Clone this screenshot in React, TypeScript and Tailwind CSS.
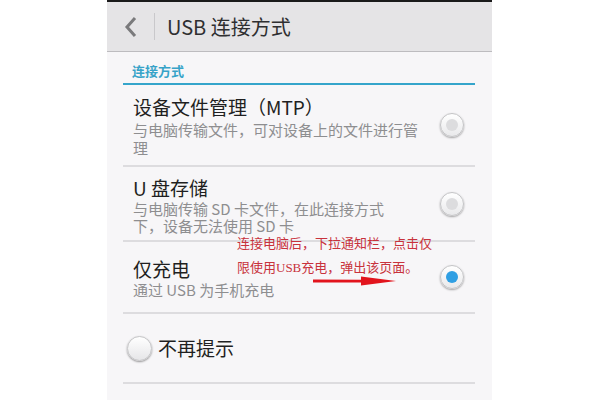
import React from "react";

const cjk = { fontFamily: '"Noto Sans CJK SC", "Noto Sans", sans-serif' };
const serif = { fontFamily: '"Liberation Serif", "Noto Sans CJK SC", serif' };

function Radio({ checked }: { checked?: boolean }) {
  return (
    <div className="w-[24px] h-[24px] rounded-full border border-[#c4c4c6] bg-gradient-to-b from-[#ffffff] to-[#e9e9eb] shadow-[0_1px_2px_rgba(0,0,0,0.35)] flex items-center justify-center shrink-0">
      <div
        className={
          checked
            ? "w-[12px] h-[12px] rounded-full bg-[#2f9fe3]"
            : "w-[12px] h-[12px] rounded-full bg-[#dcdcde]"
        }
      />
    </div>
  );
}

function Divider() {
  return <div className="ml-[16px] mr-[17px] h-[2px] bg-[#dddcdf] shrink-0" />;
}

export default function App() {
  return (
    <div className="w-[600px] h-[400px] bg-white overflow-hidden" style={cjk}>
      <div className="relative ml-[107px] w-[385px] h-[400px] flex flex-col bg-[#f7f6f8]">
        {/* status strip */}
        <div className="h-[2px] bg-[#1a1a1a] shrink-0" />

        {/* action bar */}
        <div className="h-[50px] bg-[#e5e4e6] flex items-center shrink-0 border-b border-[#bdbcbf]">
          <svg width="14" height="22" viewBox="0 0 14 22" className="ml-[17px]">
            <polyline points="11,2 3,11 11,20" fill="none" stroke="#7a7a7c" strokeWidth="3" strokeLinejoin="miter" />
          </svg>
          <div className="ml-[16px] w-[1px] h-[27px] bg-[#c9c8cb]" />
          <div className="ml-[12px] text-[20px] leading-[24px] text-[#2f2f31]">USB 连接方式</div>
        </div>

        {/* section header */}
        <div className="h-[31px] flex items-end pb-[3px] pl-[25px] shrink-0">
          <span className="text-[13px] leading-[18px] font-bold text-[#37a3c8]">连接方式</span>
        </div>
        <div className="ml-[16px] mr-[17px] h-[2px] bg-[#35a5cb] shrink-0" />

        {/* MTP */}
        <div className="h-[80px] flex items-center pl-[26px] pr-[28px] shrink-0">
          <div className="flex-1 self-start pt-[10px]">
            <div className="text-[19px] leading-[24px] text-[#1f1f21]">设备文件管理（MTP）</div>
            <div className="mt-[2px] text-[15px] leading-[18px] text-[#8e8e90]">
              与电脑传输文件，可对设备上的文件进行管
              <br />理
            </div>
          </div>
          <Radio />
        </div>
        <Divider />

        {/* mass storage */}
        <div className="h-[73px] flex items-center pl-[26px] pr-[28px] shrink-0">
          <div className="flex-1 self-start pt-[9px]">
            <div className="text-[19px] leading-[24px] text-[#1f1f21]">U 盘存储</div>
            <div className="text-[15px] leading-[17px] text-[#8e8e90]">
              与电脑传输 SD 卡文件，在此连接方式
              <br />下，设备无法使用 SD 卡
            </div>
          </div>
          <Radio />
        </div>
        <Divider />

        {/* charge only */}
        <div className="h-[70px] flex items-center pl-[26px] pr-[28px] shrink-0">
          <div className="flex-1 self-start pt-[15px]">
            <div className="text-[19px] leading-[24px] text-[#1f1f21]">仅充电</div>
            <div className="text-[15px] leading-[18px] text-[#8e8e90]">通过 USB 为手机充电</div>
          </div>
          <Radio checked />
        </div>
        <Divider />

        {/* don't show again */}
        <div className="h-[68px] flex items-center pl-[20px] shrink-0">
          <div className="w-[25px] h-[25px] rounded-full border border-[#c4c4c6] bg-gradient-to-b from-[#ffffff] to-[#e6e6e8] shadow-[0_1px_2px_rgba(0,0,0,0.4)]" />
          <span className="ml-[6px] text-[19px] leading-[24px] text-[#1f1f21]">不再提示</span>
        </div>
        <Divider />

        {/* red note over the list */}
        <div className="absolute left-[130px] top-[236px] text-[13px] leading-[16px] text-[#c8323c] whitespace-nowrap" style={serif}>
          连接电脑后，下拉通知栏，点击仅
        </div>
        <div className="absolute left-[130px] top-[260px] text-[13px] leading-[16px] text-[#c8323c] whitespace-nowrap" style={serif}>
          限使用USB充电，弹出该页面。
        </div>
        <svg className="absolute left-[206px] top-[275px]" width="84" height="12" viewBox="0 0 84 12">
          <polygon points="0,4.5 48,4.8 48,1.5 83,6 48,10.5 48,7.4 0,7.6" fill="#e2141d" />
        </svg>
      </div>
    </div>
  );
}
